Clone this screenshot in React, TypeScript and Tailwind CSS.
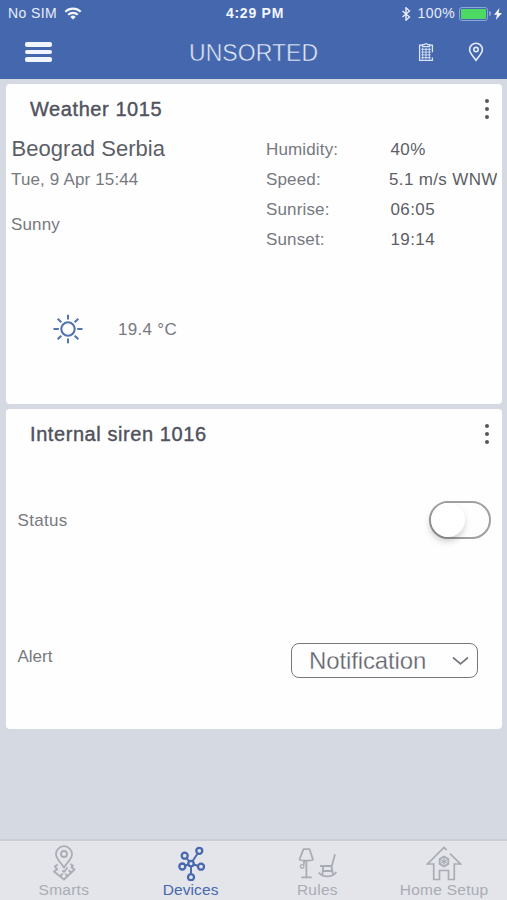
import React from "react";

function StatusBar() {
  return (
    <div className="grid h-[27px] grid-cols-3 items-center pl-[8px] pr-[5px] text-[14px] leading-[27px] text-[#e6edfb]">
      <div className="flex items-center gap-[7px]">
        <span className="tracking-[0.4px]">No SIM</span>
        <svg width="18" height="13" viewBox="0 0 18 13" fill="none" stroke="#f2f6ff" strokeWidth="2.2">
          <path d="M1.3 4.7a11 11 0 0 1 15.4 0" />
          <path d="M4.2 7.8a6.8 6.8 0 0 1 9.6 0" />
          <path d="M9 12.6 6.3 9.9a3.9 3.9 0 0 1 5.4 0Z" fill="#f2f6ff" stroke="none" />
        </svg>
      </div>
      <div className="text-center text-[14px] font-bold tracking-[0.75px] text-[#f2f6ff]">4:29 PM</div>
      <div className="flex items-center justify-end">
        <svg width="10" height="14" viewBox="0 0 9 14" fill="none" stroke="#e6edfb" strokeWidth="1.4" className="mr-[7px]">
          <path d="M1 4l7 6-3.5 3.2V.8L8 4l-7 6" />
        </svg>
        <span className="mr-[4px] tracking-[0.4px]">100%</span>
        <div className="h-[14px] w-[29px] rounded-[3px] border border-[#8ba6d8] p-[1px]">
          <div className="h-full rounded-[1px] bg-[#4cd964]" />
        </div>
        <div className="ml-[1px] h-[5px] w-[2px] rounded-r bg-[#8ba6d8]" />
        <svg width="8" height="12" viewBox="0 0 8 12" className="ml-[3px]" fill="#f2f6ff">
          <path d="M5.4 0 0 6.8h3L1.8 12 8 4.9H4.6Z" />
        </svg>
      </div>
    </div>
  );
}

function NavBar() {
  return (
    <div className="flex h-[52px] items-center pl-[25px] pr-[23px]">
      <div className="-mt-[2px] flex w-[27px] flex-col gap-[3px]">
        <div className="h-[4.5px] rounded-[2px] bg-[#f0f5ff]" />
        <div className="h-[4.5px] rounded-[2px] bg-[#f0f5ff]" />
        <div className="h-[4.5px] rounded-[2px] bg-[#f0f5ff]" />
      </div>
      <div className="ml-[137px] w-[140px] whitespace-nowrap text-[23px] leading-[30px] tracking-[0.05px] text-[#e6eefc] [-webkit-text-stroke:0.5px_#4567ae]">UNSORTED</div>
      <svg width="16" height="20" viewBox="0 0 16 20" className="-mt-[2px] ml-auto" fill="none" stroke="#dbe6fa">
        <path d="M5 3.2H1.6v15.2h12.8v-3M11 3.2h3.4v7" strokeWidth="1.3" />
        <path d="M4.4 4.6V2.7h2a1.7 1.7 0 0 1 3.2 0h2v1.9Z" strokeWidth="1.2" />
        <path d="M3.2 7.3h9.6M3.2 10.1h9.6M3.2 12.9h9.6M3.2 15.7h9.6M4.7 6v11.4M8 6v11.4M11.3 6v11.4" strokeWidth="0.9" />
      </svg>
      <svg width="16" height="20" viewBox="0 0 16 20" className="-mt-[2px] ml-[34px]" fill="none" stroke="#e3ecfd">
        <path d="M8 18.3C5.2 14.3 1.6 10.8 1.6 7.7a6.4 6.4 0 0 1 12.8 0c0 3.1-3.6 6.6-6.4 10.6Z" strokeWidth="1.6" />
        <circle cx="8" cy="7.6" r="2.2" strokeWidth="1.6" />
      </svg>
    </div>
  );
}

function Card({ title, titleClass, children }: { title: string; titleClass: string; children: React.ReactNode }) {
  return (
    <section className="h-[320px] overflow-hidden rounded-[4px] bg-[#fefefe]">
      <header className="flex h-[50px] items-center justify-between pl-[24px] pr-[13px]">
        <h2 className={"text-[20px] leading-[30px] text-[#50525d] [-webkit-text-stroke:0.4px_#50525d] " + titleClass}>{title}</h2>
        <div className="-mt-[1px] flex flex-col gap-[4px]">
          <div className="size-[4px] rounded-full bg-[#55575d]" />
          <div className="size-[4px] rounded-full bg-[#55575d]" />
          <div className="size-[4px] rounded-full bg-[#55575d]" />
        </div>
      </header>
      {children}
    </section>
  );
}

function Reading({ label, value, shift }: { label: string; value: string; shift?: boolean }) {
  return (
    <div className="flex h-[30px] items-center whitespace-nowrap text-[17px]">
      <span className="w-[124px] shrink-0 tracking-[0.15px] text-[#777980]">{label}</span>
      <span className={shift ? "-ml-px tracking-[0.35px]" : "ml-[0.5px] tracking-[0.4px]"}>{value}</span>
    </div>
  );
}

function SunIcon() {
  return (
    <svg width="30" height="30" viewBox="0 0 30 30" fill="none" stroke="#5272b0">
      <circle cx="15" cy="15" r="6.7" strokeWidth="2.1" />
      <path d="M15 .8v4.7M15 24.500v4.700M.5 15H5.800M24.200 15h5.300M4.700 4.700l3.600 3.600M21.700 21.700l3.600 3.600M25.300 4.700l-3.600 3.600M8.300 21.700l-3.600 3.600" strokeWidth="2" />
    </svg>
  );
}

function SmartsIcon() {
  return (
    <svg width="24" height="36" viewBox="0 0 24 36" fill="none" stroke="currentColor" strokeWidth="1.8" strokeLinejoin="round">
      <path d="M12 22.500C9 17.500 4 14 4 9.200a8 8 0 0 1 16 0c0 4.800-5 8.300-8 13.300Z" />
      <circle cx="12" cy="9" r="3" />
      <path d="M5.500 19.500 2.800 21.500l2.400 2.700-3.200 2.300L12 34.500l10.500-10-3-2.300 1.500-1.500-2.500-1.700M8.300 31l2.400-2.400M15.500 31l-2.200-2.200M19 27.500l-2.300-2.300M10.500 25.500 12 27l3.500-4.500" />
    </svg>
  );
}

function DevicesIcon() {
  return (
    <svg width="28" height="36" viewBox="0 0 28 36" fill="none" stroke="currentColor" strokeWidth="2.3">
      <path d="M15.500 16.200 20.600 8.500M12.200 16.500 9.800 13.300M11.200 19.300l-3 1.300M16.800 19.500l4.700 1.500M14 21.500v8" strokeWidth="1.900" />
      <circle cx="14" cy="18.600" r="2.700" />
      <circle cx="22.300" cy="5.800" r="3" />
      <circle cx="7.700" cy="10.700" r="3" />
      <circle cx="5.300" cy="21.500" r="3" />
      <circle cx="24" cy="21.700" r="3" />
      <circle cx="14" cy="32.200" r="3" />
    </svg>
  );
}

function RulesIcon() {
  return (
    <svg width="40" height="36" viewBox="0 0 40 36" fill="none" stroke="currentColor" strokeWidth="1.8" strokeLinejoin="round">
      <path d="M6.500 4.200h6l3.500 10.300c-1.500 1.600-12 1.600-13.500 0ZM9.400 15.500V32M7 15.800v4M4.200 32.300h10.500" />
      <circle cx="5.200" cy="21.500" r="1.800" strokeWidth="1.300" />
      <path d="M38 9.200 34.700 21.500M23 21h12.500M26.200 21.500l-.8 8.500M34.500 21.500l1.300 7.500M26 26h9M21.700 27.500c4 5.300 13.500 5.300 17.600-.5" />
    </svg>
  );
}

function HomeIcon() {
  return (
    <svg width="36" height="36" viewBox="0 0 36 36" fill="none" stroke="currentColor" strokeWidth="1.7">
      <path d="M20.700 5.200 18 2.500 1.500 19h6.200v15.500h5.800v-9h9v9h5.800V19h6.200L24 8.600" />
      <path d="M18 11.500l4.300 2.500v5L18 21.500 13.700 19v-5Z" strokeWidth="1.800" />
      <path d="M18 12v9M14.200 14.300l7.600 4.400M21.800 14.300l-7.600 4.400" strokeWidth="1" />
      <circle cx="18" cy="16.500" r="1.700" strokeWidth="1" />
    </svg>
  );
}

function Tab({ label, icon, active }: { label: string; icon: React.ReactNode; active?: boolean }) {
  return (
    <div className={"flex flex-col items-center pl-px pt-[4px] " + (active ? "text-[#4768af]" : "text-[#a9acb5]")}>
      {icon}
      <span className={"text-[15.5px] leading-[18px] " + (active ? "tracking-[0.1px]" : "tracking-[0.25px]")}>{label}</span>
    </div>
  );
}

export default function App() {
  return (
    <div className="flex h-[900px] w-[507px] flex-col overflow-hidden bg-[#d5d9e2] font-['Liberation_Sans',Arial,sans-serif]">
      <div className="h-[79px] bg-[#4567ae]">
        <StatusBar />
        <NavBar />
      </div>
      <main className="flex flex-1 flex-col gap-[5px] pl-[6px] pr-[5px] pt-[5px]">
        <Card title="Weather 1015" titleClass="tracking-[0.58px]">
          <div className="flex h-[120px] pl-[5px] pr-[5px] text-[#5c5e66]">
            <div className="w-[255px] shrink-0 text-[17px] tracking-[0.15px] text-[#777980]">
              <div className="h-[30px] pl-[0.5px] text-[22px] leading-[30px] tracking-[0.05px] text-[#5c5e67]">Beograd Serbia</div>
              <div className="h-[30px] leading-[31px]">Tue, 9 Apr 15:44</div>
              <div className="mt-[15px] h-[30px] leading-[31px]">Sunny</div>
            </div>
            <div className="min-w-0 flex-1 pt-px">
              <div className="overflow-hidden">
                <Reading label="Humidity:" value="40%" />
                <Reading label="Speed:" value="5.1 m/s WNW" shift />
                <Reading label="Sunrise:" value="06:05" />
                <Reading label="Sunset:" value="19:14" />
              </div>
            </div>
          </div>
          <div className="mt-[60px] flex h-[30px] items-center pl-[47px] text-[17px] text-[#777980]">
            <SunIcon />
            <span className="ml-[35px] mt-px tracking-[0.3px]">19.4 °C</span>
          </div>
        </Card>
        <Card title="Internal siren 1016" titleClass="tracking-[0.58px]">
          <div className="mt-[41px] flex h-[40px] items-center justify-between pl-[11.5px] pr-[11px]">
            <span className="mt-px text-[17px] tracking-[0.3px] text-[#777980]">Status</span>
            <div className="h-[38px] w-[62px] rounded-full border-2 border-[#a0a0a2]">
              <div className="size-[34px] rounded-full bg-white shadow-[-1px_4px_7px_rgba(0,0,0,0.22)]" />
            </div>
          </div>
          <div className="mt-[103px] flex h-[35px] items-center justify-between pl-[11.5px] pr-[24px]">
            <span className="-mt-[8px] text-[17px] text-[#777980]">Alert</span>
            <div className="flex h-[35px] w-[187px] items-center justify-between rounded-[8px] border-[1.5px] border-[#77787d] pl-[17px] pr-[8px]">
              <span className="text-[24px] leading-[30px] tracking-[-0.12px] text-[#60626b] [-webkit-text-stroke:0.3px_#fefefe]">Notification</span>
              <svg width="17" height="10" viewBox="0 0 17 10" fill="none" stroke="#77797f" strokeWidth="1.700">
                <path d="m1 1.500 7.500 6.500L16 1.500" />
              </svg>
            </div>
          </div>
        </Card>
      </main>
      <nav className="grid h-[61px] grid-cols-4 border-t-2 border-[#c9ced7] bg-[#e3e5ea]">
        <Tab label="Smarts" icon={<SmartsIcon />} />
        <Tab label="Devices" icon={<DevicesIcon />} active />
        <Tab label="Rules" icon={<RulesIcon />} />
        <Tab label="Home Setup" icon={<HomeIcon />} />
      </nav>
    </div>
  );
}
